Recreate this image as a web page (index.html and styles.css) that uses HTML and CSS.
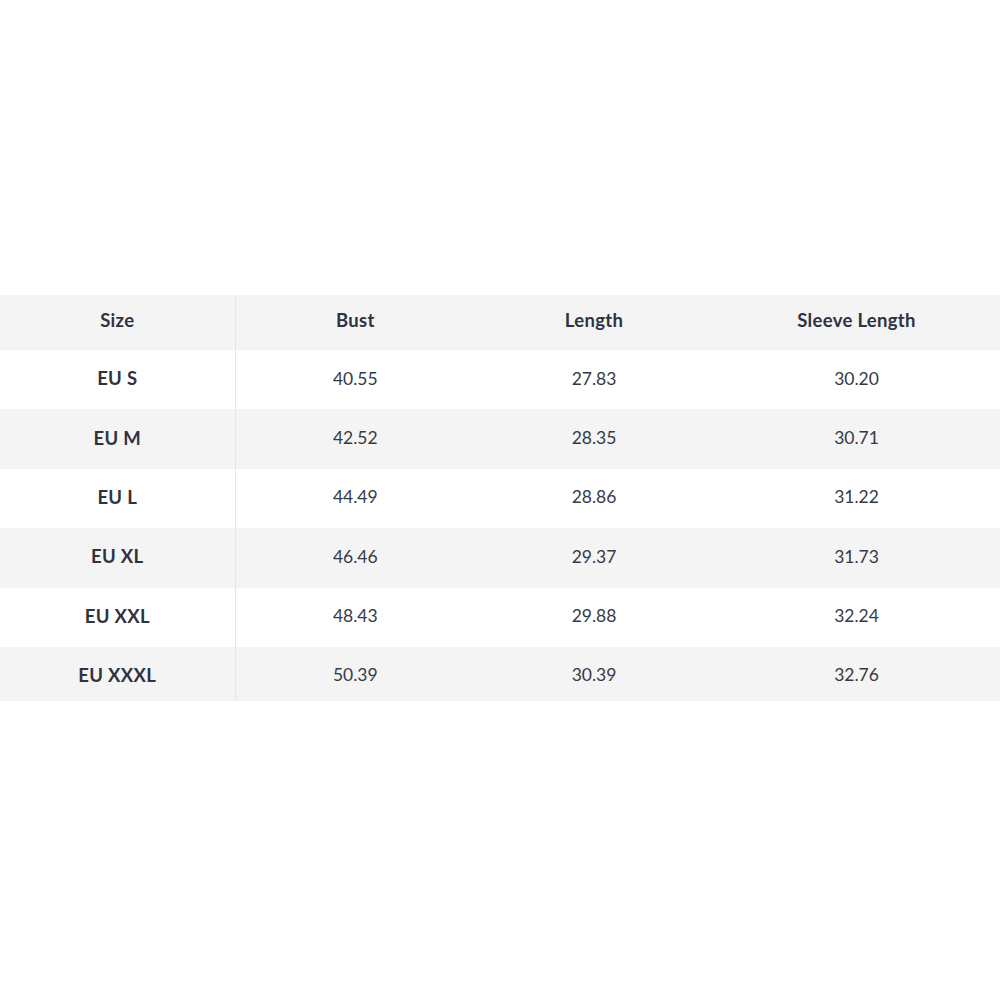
FILE: index.html
```html
<!DOCTYPE html>
<html>
<head>
<meta charset="utf-8">
<link rel="stylesheet" href="styles.css">
</head>
<body>
<div class="page">
<table class="size-table">
  <colgroup>
    <col class="c1"><col class="c2"><col class="c3"><col class="c4">
  </colgroup>
  <thead>
    <tr class="head"><th class="first">Size</th><th>Bust</th><th>Length</th><th>Sleeve Length</th></tr>
  </thead>
  <tbody>
    <tr class="odd"><th class="first">EU S</th><td>40.55</td><td>27.83</td><td>30.20</td></tr>
    <tr class="even"><th class="first">EU M</th><td>42.52</td><td>28.35</td><td>30.71</td></tr>
    <tr class="odd"><th class="first">EU L</th><td>44.49</td><td>28.86</td><td>31.22</td></tr>
    <tr class="even"><th class="first">EU XL</th><td>46.46</td><td>29.37</td><td>31.73</td></tr>
    <tr class="odd"><th class="first">EU XXL</th><td>48.43</td><td>29.88</td><td>32.24</td></tr>
    <tr class="even last"><th class="first">EU XXXL</th><td>50.39</td><td>30.39</td><td>32.76</td></tr>
  </tbody>
</table>
</div>
</body>
</html>
```

FILE: styles.css
```css
html, body {
  margin: 0;
  padding: 0;
  background: #ffffff;
}
.page {
  padding-top: 295px;
  width: 1000px;
}
.size-table {
  width: 1000px;
  border-collapse: collapse;
  table-layout: fixed;
  font-family: Lato, "Noto Sans", sans-serif;
  font-size: 17.5px;
  color: #363a45;
}
.c1 { width: 235px; }
.c2 { width: 240px; }
.c3 { width: 238px; }
.c4 { width: 287px; }
.size-table th,
.size-table td {
  padding: 0 0 3px 0;
  text-align: center;
  vertical-align: middle;
}
.size-table th {
  font-weight: 700;
  font-size: 18.5px;
  letter-spacing: 0.3px;
  color: #2f3340;
}
.size-table td {
  font-weight: 400;
}
.head th { padding-bottom: 5px; }
.head { height: 55px; background: #f4f4f4; }
.odd { height: 59.4px; background: #ffffff; }
.even { height: 59.4px; background: #f4f4f4; }
.last { height: 54px; }
.size-table .last th,
.size-table .last td {
  padding: 2px 0 0 0;
}
.size-table .first {
  border-right: 1px solid #e6e6e6;
}
```
